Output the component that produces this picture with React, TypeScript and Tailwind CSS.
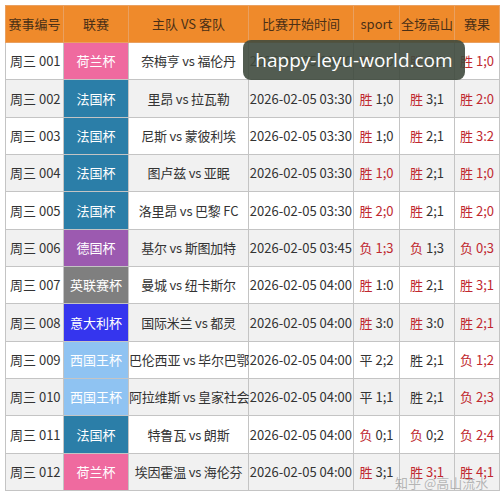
import React from "react";

type Part = { t: string; red?: boolean };
type Row = {
  id: string;
  league: string;
  lc: string;
  match: string;
  time: string;
  sport: Part[];
  full: Part[];
  res: string;
};

const R = (a: string, b: string, allRed: boolean): Part[] =>
  allRed ? [{ t: a + " " + b, red: true }] : [{ t: a, red: true }, { t: " " + b }];
const D = (s: string): Part[] => [{ t: s }];

const rows: Row[] = [
  { id: "周三 001", league: "荷兰杯", lc: "bg-[#ef6a9f]", match: "奈梅亨 vs 福伦丹", time: "2026-02-05 03:30", sport: R("胜", "1;0", false), full: R("胜", "2;1", false), res: "胜 1;0" },
  { id: "周三 002", league: "法国杯", lc: "bg-[#2b7ea8]", match: "里昂 vs 拉瓦勒", time: "2026-02-05 03:30", sport: R("胜", "1;0", false), full: R("胜", "3;1", false), res: "胜 2:0" },
  { id: "周三 003", league: "法国杯", lc: "bg-[#2b7ea8]", match: "尼斯 vs 蒙彼利埃", time: "2026-02-05 03:30", sport: R("胜", "1;0", false), full: R("胜", "2;1", false), res: "胜 3:2" },
  { id: "周三 004", league: "法国杯", lc: "bg-[#2b7ea8]", match: "图卢兹 vs 亚眠", time: "2026-02-05 03:30", sport: R("胜", "1;0", true), full: R("胜", "2;1", false), res: "胜 1;0" },
  { id: "周三 005", league: "法国杯", lc: "bg-[#2b7ea8]", match: "洛里昂 vs 巴黎 FC", time: "2026-02-05 03:30", sport: R("胜", "2;0", true), full: R("胜", "2;1", false), res: "胜 2;0" },
  { id: "周三 006", league: "德国杯", lc: "bg-[#9c5ab0]", match: "基尔 vs 斯图加特", time: "2026-02-05 03:45", sport: R("负", "1;3", true), full: R("负", "1;3", false), res: "负 0;3" },
  { id: "周三 007", league: "英联赛杯", lc: "bg-[#7f7f7f]", match: "曼城 vs 纽卡斯尔", time: "2026-02-05 04:00", sport: R("胜", "1:0", false), full: R("胜", "2;1", false), res: "胜 3;1" },
  { id: "周三 008", league: "意大利杯", lc: "bg-[#3535ee]", match: "国际米兰 vs 都灵", time: "2026-02-05 04:00", sport: R("胜", "3:0", false), full: R("胜", "3:0", false), res: "胜 2;1" },
  { id: "周三 009", league: "西国王杯", lc: "bg-[#8fc3f2]", match: "巴伦西亚 vs 毕尔巴鄂", time: "2026-02-05 04:00", sport: D("平 2;2"), full: D("胜 2;1"), res: "负 1;2" },
  { id: "周三 010", league: "西国王杯", lc: "bg-[#8fc3f2]", match: "阿拉维斯 vs 皇家社会", time: "2026-02-05 04:00", sport: D("平 1;1"), full: D("胜 2;1"), res: "负 2;3" },
  { id: "周三 011", league: "法国杯", lc: "bg-[#2b7ea8]", match: "特鲁瓦 vs 朗斯", time: "2026-02-05 04:00", sport: R("负", "0;1", false), full: R("负", "0;2", false), res: "负 2;4" },
  { id: "周三 012", league: "荷兰杯", lc: "bg-[#ef6a9f]", match: "埃因霍温 vs 海伦芬", time: "2026-02-05 04:00", sport: R("胜", "3;1", false), full: R("胜", "3;1", true), res: "胜 4;1" },
];

const font = { fontFamily: '"Noto Sans CJK SC", "Noto Sans", sans-serif' };

function Parts({ p }: { p: Part[] }) {
  return (
    <>
      {p.map((x, i) => (
        <span key={i} className={x.red ? "text-[#c0282f]" : ""}>
          {x.t}
        </span>
      ))}
    </>
  );
}

export default function App() {
  const cell = "border border-[#c4c4c4] text-center whitespace-nowrap p-0";
  return (
    <div className="relative w-[504px] h-[500px] bg-white overflow-hidden" style={font}>
      <div className="pt-[5px] pl-[5px]">
        <table className="table-fixed border-collapse w-[494px] text-[13px] text-[#333]">
          <colgroup>
            <col className="w-[58px]" />
            <col className="w-[65px]" />
            <col className="w-[120px]" />
            <col className="w-[105px]" />
            <col className="w-[46px]" />
            <col className="w-[55px]" />
            <col className="w-[45px]" />
          </colgroup>
          <thead>
            <tr className="h-[37px] bg-[#ef8a2b] text-[#4a2f16] text-[13px]">
              <th className={cell + " font-normal border-[#e9a060]"}>赛事编号</th>
              <th className={cell + " font-normal border-[#e9a060]"}>联赛</th>
              <th className={cell + " font-normal border-[#e9a060]"}>主队 VS 客队</th>
              <th className={cell + " font-normal border-[#e9a060]"}>比赛开始时间</th>
              <th className={cell + " font-normal border-[#e9a060]"}>sport</th>
              <th className={cell + " font-normal border-[#e9a060]"}>全场高山</th>
              <th className={cell + " font-normal border-[#e9a060]"}>赛果</th>
            </tr>
          </thead>
          <tbody>
            {rows.map((r, i) => (
              <tr key={r.id} className={"h-[37.33px] " + (i % 2 === 1 ? "bg-[#f1f1f1]" : "bg-white")}>
                <td className={cell + " text-left pl-[4px]"}>{r.id}</td>
                <td className={cell + " text-white " + r.lc}>{r.league}</td>
                <td className={cell + " tracking-[-0.2px]"}>{r.match}</td>
                <td className={cell + " text-right pr-[1px]"}>{r.time}</td>
                <td className={cell}>
                  <Parts p={r.sport} />
                </td>
                <td className={cell}>
                  <Parts p={r.full} />
                </td>
                <td className={cell + " text-[#c0282f]"}>{r.res}</td>
              </tr>
            ))}
          </tbody>
        </table>
      </div>
      <div
        className="absolute left-[243px] top-[40px] w-[222px] h-[40px] rounded-[8px] bg-[#3f4a3e]/90 flex items-center justify-center text-white text-[19px]"
        style={{ fontFamily: '"Open Sans", "DejaVu Sans", sans-serif' }}
      >
        happy-leyu-world.com
      </div>
      <div className="absolute left-[395px] top-[473px] whitespace-nowrap text-[13px] text-[#9a9a9a]/70">
        知乎 @高山流水
      </div>
    </div>
  );
}
